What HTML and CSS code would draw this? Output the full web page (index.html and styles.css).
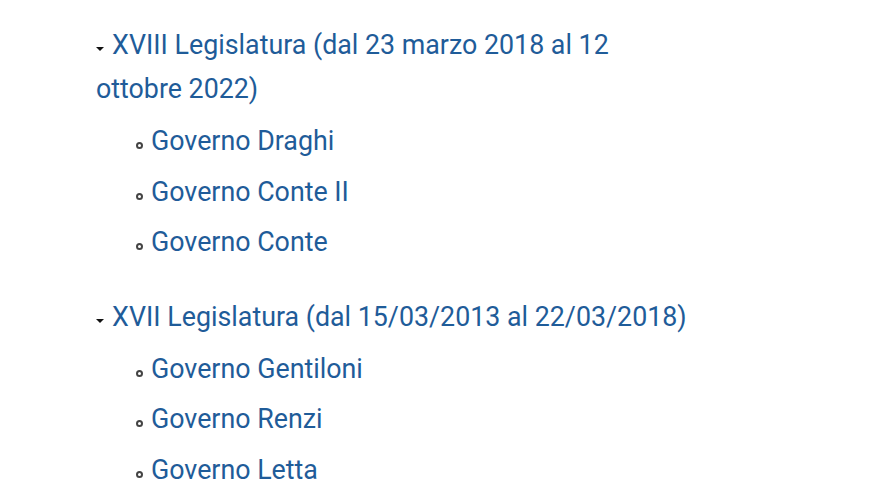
FILE: index.html
```html
<!DOCTYPE html>
<html>
<head>
    <title>Legislature e Governi</title>
    <link rel="stylesheet" href="styles.css">
</head>
<body>
    <div class="container">
        <div class="legislatura">
            <div class="titolo"><span class="freccia"></span><a href="#">XVIII Legislatura (dal 23 marzo 2018 al 12 ottobre 2022)</a></div>
            <ul class="governi">
                <li><a href="#">Governo Draghi</a></li>
                <li><a href="#">Governo Conte II</a></li>
                <li><a href="#">Governo Conte</a></li>
            </ul>
        </div>

        <div class="legislatura">
            <div class="titolo"><span class="freccia"></span><a href="#">XVII Legislatura (dal 15/03/2013 al 22/03/2018)</a></div>
            <ul class="governi">
                <li><a href="#">Governo Gentiloni</a></li>
                <li><a href="#">Governo Renzi</a></li>
                <li><a href="#">Governo Letta</a></li>
            </ul>
        </div>
    </div>
</body>
</html>
```
FILE: styles.css
```css
body {
    margin: 0;
    background-color: #ffffff;
    font-family: Roboto, "Liberation Sans", sans-serif;
    font-size: 26.8px;
}
.container {
    width: 598px;
    padding: 23px 0 0 96px;
}
a {
    color: #1f5c99;
    text-decoration: none;
}
.legislatura {
    margin-bottom: 27px;
}
.legislatura:last-child {
    margin-bottom: 0;
}
.titolo {
    line-height: 44px;
}
.freccia {
    display: inline-block;
    width: 0;
    height: 0;
    border-left: 4px solid transparent;
    border-right: 4px solid transparent;
    border-top: 4px solid #111;
    margin-right: 8px;
    vertical-align: 3px;
}
.governi {
    list-style: none;
    margin: 5px 0 0 0;
    padding: 0 0 0 40px;
}
.governi li {
    line-height: 50.5px;
}
.governi li::before {
    content: "";
    display: inline-block;
    width: 3px;
    height: 3px;
    border: 2px solid #444;
    border-radius: 50%;
    margin-right: 8px;
    vertical-align: 1px;
}
```
